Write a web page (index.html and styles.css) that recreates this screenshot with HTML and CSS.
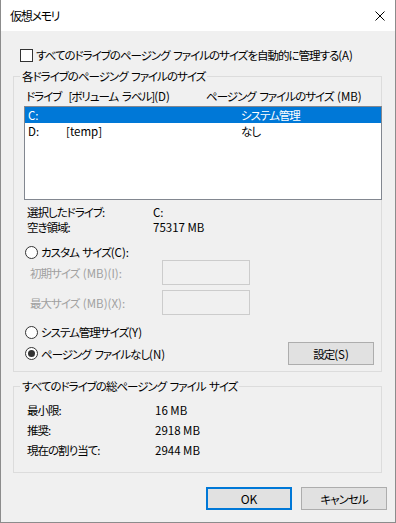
FILE: index.html
```html
<!DOCTYPE html>
<html lang="ja">
<head>
<meta charset="utf-8">
<title>仮想メモリ</title>
<link rel="stylesheet" href="styles.css">
</head>
<body>
<div class="win">
  <div class="titlebar">
    <span class="title">仮想メモリ</span>
    <svg class="close" width="10" height="10" viewBox="0 0 10 10"><path d="M0.5 0.5 L9.5 9.5 M9.5 0.5 L0.5 9.5" stroke="#000" stroke-width="1" fill="none"/></svg>
  </div>
  <div class="content">
    <div class="auto-row">
      <span class="checkbox"></span>
      <span class="label">すべてのドライブのページング ファイルのサイズを自動的に管理する<span class="v">(A)</span></span>
    </div>

    <fieldset class="group group-drives">
      <legend>各ドライブのページング ファイルのサイズ</legend>
      <div class="list-head">
        <span class="col-drive">ドライブ&nbsp; [ボリューム ラベル]<span class="v">(D)</span></span>
        <span class="col-size">ページング ファイルのサイズ <span class="v">(MB)</span></span>
      </div>
      <div class="listbox">
        <div class="item selected"><span class="c1">C:</span><span class="c2"></span><span class="c3">システム管理</span></div>
        <div class="item"><span class="c1">D:</span><span class="c2 v">[temp]</span><span class="c3">なし</span></div>
      </div>
      <div class="info">
        <div class="info-row"><span class="k">選択したドライブ:</span><span class="v">C:</span></div>
        <div class="info-row"><span class="k">空き領域:</span><span class="v">75317 MB</span></div>
      </div>
      <div class="radio-row custom"><span class="radio"></span><span>カスタム サイズ<span class="v">(C):</span></span></div>
      <div class="size-row first"><span class="size-label">初期サイズ <span class="v">(MB)(I):</span></span><span class="textbox"></span></div>
      <div class="size-row"><span class="size-label">最大サイズ <span class="v">(MB)(X):</span></span><span class="textbox"></span></div>
      <div class="radio-row sys"><span class="radio"></span><span>システム管理サイズ<span class="v">(Y)</span></span></div>
      <div class="none-row">
        <div class="radio-row-inner"><span class="radio checked"></span><span>ページング ファイルなし<span class="v">(N)</span></span></div>
        <span class="btn set">設定<span class="v">(S)</span></span>
      </div>
    </fieldset>

    <fieldset class="group group-total">
      <legend>すべてのドライブの総ページング ファイル サイズ</legend>
      <div class="total">
        <div class="total-row"><span class="k">最小限:</span><span class="v">16 MB</span></div>
        <div class="total-row"><span class="k">推奨:</span><span class="v">2918 MB</span></div>
        <div class="total-row"><span class="k">現在の割り当て:</span><span class="v">2944 MB</span></div>
      </div>
    </fieldset>

    <div class="buttons">
      <span class="btn ok v">OK</span>
      <span class="btn cancel">キャンセル</span>
    </div>
  </div>
</div>
</body>
</html>
```
FILE: styles.css
```css
* { box-sizing: border-box; }
html, body { margin: 0; padding: 0; background: #f0f0f0; }
body {
  font-family: "Noto Sans CJK JP", "Noto Sans", sans-serif;
  font-size: 11.5px;
  letter-spacing: -1px;
  word-spacing: 2px;
  font-feature-settings: "palt";
  color: #000;
  white-space: nowrap;
}
.v { letter-spacing: 0; word-spacing: 0; }
.win {
  width: 396px;
  height: 523px;
  border: 1px solid #8c8c8c;
  border-top: none;
  background: #f0f0f0;
  overflow: hidden;
}
.titlebar {
  height: 31px;
  background: #fff;
  display: flex;
  align-items: center;
  justify-content: space-between;
  padding: 0 10px 0 9px;
}
.title { line-height: 16px; font-size: 12px; letter-spacing: -1.3px; }
.close { display: block; }

.content { padding: 0; }

.auto-row {
  display: flex;
  align-items: center;
  height: 16px;
  margin-top: 16px;
  margin-left: 19px;
}
.checkbox {
  width: 13px;
  height: 13px;
  border: 1px solid #333;
  background: #fff;
  flex: none;
}
.auto-row .label { margin-left: 3px; line-height: 16px; }

.group {
  margin: 5px 0 0 12px;
  width: 369px;
  padding: 0;
  border: 1px solid #dcdcdc;
  min-width: 0;
}
.group legend {
  margin-left: 6px;
  padding: 0 2px;
  line-height: 16px;
}

.list-head {
  display: flex;
  height: 16px;
  line-height: 16px;
  margin-top: 4px;
  padding-left: 12px;
}
.col-drive { width: 180px; }

.listbox {
  margin: 2px -1px 0 10px;
  height: 94px;
  border: 1px solid #828790;
  background: #fff;
}
.item {
  display: flex;
  height: 16px;
  line-height: 16px;
  padding-left: 3px;
}
.item.selected { background: #0078d7; color: #fff; }
.item .c1 { width: 38px; letter-spacing: 0; }
.item .c2 { width: 175px; }

.info { margin-top: 5px; }
.info-row, .total-row {
  display: flex;
  height: 15px;
  line-height: 15px;
  padding-left: 13px;
}
.info-row .k { width: 126px; }

.radio-row {
  display: flex;
  align-items: center;
  height: 16px;
  line-height: 16px;
  padding-left: 11px;
}
.radio-row.custom { margin-top: 9px; }
.radio-row.sys { margin-top: 9px; }
.radio {
  width: 13px;
  height: 13px;
  border: 1px solid #333;
  border-radius: 50%;
  background: #fff;
  margin-right: 3px;
  flex: none;
  display: flex;
  align-items: center;
  justify-content: center;
}
.radio.checked::after {
  content: "";
  width: 7px;
  height: 7px;
  border-radius: 50%;
  background: #333;
}

.size-row {
  display: flex;
  align-items: center;
  height: 25px;
  padding-left: 16px;
}
.size-row + .size-row { margin-top: 5px; }
.size-label { width: 132px; color: #a0a0a0; }
.textbox {
  width: 88px;
  height: 25px;
  border: 1px solid #cccccc;
  background: #f0f0f0;
}

.none-row {
  display: flex;
  align-items: center;
  justify-content: space-between;
  height: 23px;
  margin-top: 2px;
  margin-bottom: 6px;
  padding-left: 11px;
  padding-right: 7px;
}
.radio-row-inner { display: flex; align-items: center; line-height: 16px; }

.btn {
  display: flex;
  align-items: center;
  justify-content: center;
  width: 86px;
  height: 23px;
  background: #e1e1e1;
  border: 1px solid #adadad;
  line-height: 16px;
}

.group-total { margin-top: 6px; }
.total { margin-top: 6px; padding-bottom: 12px; }
.total-row { height: 20px; line-height: 20px; }
.total-row .k { width: 128px; }

.buttons {
  display: flex;
  justify-content: flex-end;
  gap: 9px;
  margin-top: 14px;
  padding-right: 8px;
}
.btn.ok { border: 2px solid #0078d7; font-size: 12px; }
```
